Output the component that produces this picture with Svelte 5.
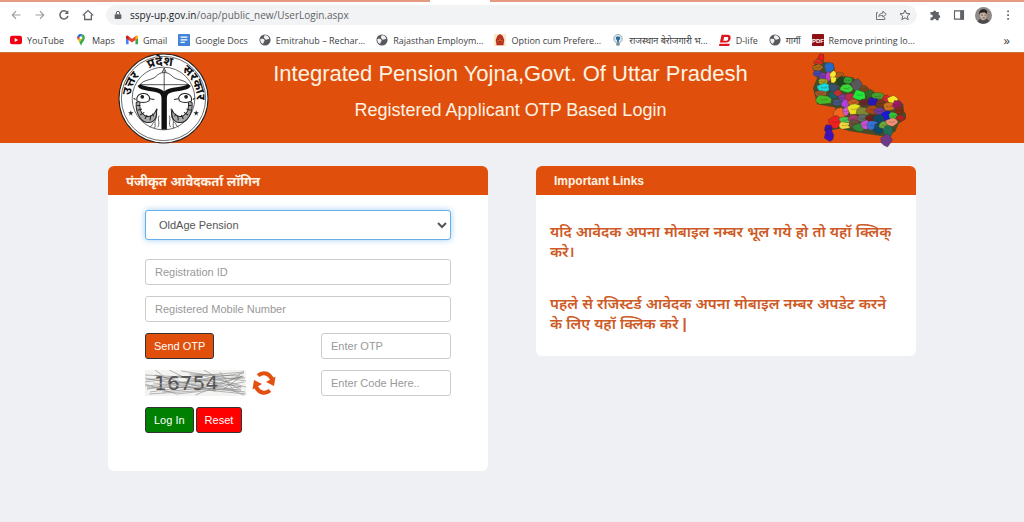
<script>
    let pension = 'OldAge Pension'
    let registration = ''
    let mobile = ''
    let otp = ''
    let code = ''

    const bookmarks = [
        { icon: 'youtube', label: 'YouTube' },
        { icon: 'maps', label: 'Maps' },
        { icon: 'gmail', label: 'Gmail' },
        { icon: 'docs', label: 'Google Docs' },
        { icon: 'globe', label: 'Emitrahub – Rechar...' },
        { icon: 'globe', label: 'Rajasthan Employm...' },
        { icon: 'option', label: 'Option cum Prefere...' },
        { icon: 'bulb', label: 'राजस्थान बेरोजगारी भ...' },
        { icon: 'dlife', label: 'D-life' },
        { icon: 'globe', label: 'गार्गी' },
        { icon: 'pdf', label: 'Remove printing lo...' }
    ]

    // districts: centre x, centre y, half width, half height, colour
    const districts = [
        [62, 24, 9, 10, '#f01818'], [54, 38, 14, 8, '#e03020'], [52, 54, 15, 10, '#b06818'],
        [86, 54, 14, 15, '#2468c8'], [52, 72, 14, 9, '#4048b0'], [68, 80, 12, 10, '#7838b8'],
        [84, 80, 9, 14, '#c838c8'], [98, 82, 10, 18, '#f8e830'], [68, 96, 14, 9, '#a8a020'],
        [118, 78, 14, 10, '#b05818'], [122, 96, 14, 15, '#204820'], [70, 114, 20, 13, '#18d8d8'],
        [98, 114, 14, 12, '#385070'], [142, 92, 14, 10, '#30a838'], [138, 116, 20, 12, '#38d838'],
        [168, 106, 16, 18, '#58585c'], [60, 132, 18, 9, '#a05828'], [70, 150, 24, 14, '#48b828'],
        [98, 136, 14, 11, '#186068'], [112, 130, 12, 9, '#d03030'], [126, 144, 13, 10, '#8038a8'],
        [148, 142, 15, 12, '#c02848'], [176, 136, 20, 15, '#20e838'], [190, 118, 14, 10, '#784820'],
        [206, 132, 14, 12, '#306828'], [230, 140, 18, 12, '#48a030'], [110, 158, 14, 10, '#405888'],
        [134, 162, 12, 13, '#b040d8'], [158, 158, 16, 10, '#c86020'], [190, 158, 14, 10, '#682828'],
        [216, 156, 16, 13, '#2818b0'], [240, 160, 15, 12, '#783818'], [256, 146, 12, 10, '#e02030'],
        [274, 150, 15, 12, '#f8e828'], [264, 170, 17, 13, '#d07020'], [288, 164, 14, 12, '#a01868'],
        [118, 190, 19, 16, '#f06820'], [136, 184, 10, 13, '#d858d0'], [160, 178, 20, 16, '#e8e020'],
        [186, 184, 20, 13, '#808838'], [214, 180, 20, 13, '#a84818'], [236, 184, 16, 11, '#7038a0'],
        [256, 198, 16, 15, '#1818d8'], [276, 198, 13, 12, '#30c838'], [294, 182, 13, 11, '#882818'],
        [298, 204, 14, 9, '#a82020'], [104, 216, 20, 18, '#f02020'], [134, 210, 19, 10, '#48c850'],
        [160, 206, 18, 12, '#a83868'], [186, 206, 17, 13, '#606868'], [212, 206, 18, 12, '#702018'],
        [232, 208, 16, 14, '#104868'], [132, 226, 17, 11, '#f0d840'], [160, 222, 16, 13, '#68503c'],
        [176, 232, 20, 12, '#308838'], [194, 224, 14, 13, '#c850d8'], [214, 226, 16, 14, '#3870d8'],
        [232, 236, 15, 15, '#104868'], [250, 226, 16, 12, '#70a838'], [272, 216, 17, 12, '#f09078'],
        [260, 244, 14, 18, '#207058'], [84, 236, 12, 12, '#4010b0'], [86, 256, 14, 17, '#4010c0'],
        [256, 270, 16, 18, '#703888']
    ]

    function outline(cx, cy, rx, ry, seed) {
        let points = []
        for (let i = 0; i < 9; i++) {
            let angle = (i / 9) * Math.PI * 2
            let wobble = 0.84 + 0.3 * Math.abs(Math.sin(seed * 7 + i * 5))
            points.push(Math.round(cx + Math.cos(angle) * rx * wobble) + ',' + Math.round(cy + Math.sin(angle) * ry * wobble))
        }
        return points.join(' ')
    }
</script>

<div class="browser">
    <div class="tabs"><span></span></div>
    <div class="toolbar">
        <button aria-label="Back" class="faded"><svg viewBox="0 0 16 16"><path d="M14 8H3M8 3L3 8l5 5" /></svg></button>
        <button aria-label="Forward" class="faded"><svg viewBox="0 0 16 16"><path d="M2 8h11M8 3l5 5-5 5" /></svg></button>
        <button aria-label="Reload"><svg viewBox="0 0 16 16"><path d="M13.2 9.2A5.4 5.4 0 1 1 12 4.3" stroke-width="2" /><path d="M13.8 1.5v5H8.8z" fill="#5f6368" stroke="none" /></svg></button>
        <button aria-label="Home"><svg viewBox="0 0 16 16"><path d="M1 8.500L8 2l7 6.500M3.500 7.500V14h9V7.500" stroke-width="1.700" /></svg></button>
        <div class="address">
            <svg class="lock" viewBox="0 0 12 14"><path d="M2 6h8a1 1 0 0 1 1 1v5a1 1 0 0 1-1 1H2a1 1 0 0 1-1-1V7a1 1 0 0 1 1-1z" fill="#5f6368" stroke="none" /><path d="M3.500 6V4a2.500 2.500 0 0 1 5 0v2" stroke-width="1.500" /></svg>
            <span class="url"><b>sspy-up.gov.in</b>/oap/public_new/UserLogin.aspx</span>
            <button aria-label="Share"><svg viewBox="0 0 16 16"><path d="M4 5H2v9h11v-3M5 10c.5-3 2.500-4.500 5.500-4.500V3L15 7l-4.500 4V8.500C8 8.500 6.500 9 5 10z" stroke-width="1.200" /></svg></button>
            <button aria-label="Bookmark this page"><svg viewBox="0 0 16 16"><path d="M8 1.500l1.900 4.400 4.800.4-3.600 3.200 1.100 4.700L8 11.700l-4.200 2.500 1.100-4.700-3.600-3.200 4.800-.4z" stroke-width="1.300" /></svg></button>
        </div>
        <button aria-label="Extensions"><svg viewBox="0 0 16 16"><path d="M2 4h3.500a2 2 0 1 1 4 0H13v4a2 2 0 1 1 0 4v3H9.500a2 2 0 1 0-4 0H2v-4a2 2 0 1 0 0-3.500z" fill="#5f6368" stroke="none" /></svg></button>
        <button aria-label="Side panel"><svg viewBox="0 0 16 16"><path d="M2 2.500h12v11H2z" /><path d="M9.500 2h5v12h-5z" fill="#5f6368" stroke="none" /></svg></button>
        <button aria-label="Profile" class="profile">
            <svg viewBox="0 0 18 18">
                <circle cx="9" cy="9" r="9" fill="#8f8986" stroke="none" />
                <path d="M3 16c1-4 4-4 5-4s6 0 7 3a9 9 0 0 1-12 1z" fill="#4d4a4d" stroke="none" />
                <path d="M5.500 6h6.500v4c0 3-2 4-3.500 4s-3-2-3-4z" fill="#c9b3a5" stroke="none" />
                <path d="M4.500 8c-1-6 6-7 8.500-3.500l-.5 3-2.500-2-4 .5z" fill="#252224" stroke="none" />
                <path d="M6.500 8.500h2M10 8.500h1.500M8 11.500h2.500" stroke="#4b302b" stroke-width=".8" />
            </svg>
        </button>
        <button aria-label="Menu"><svg viewBox="0 0 16 16"><path d="M7 2h2.200v2.200H7zM7 7h2.200v2.200H7zM7 12h2.200v2.200H7z" fill="#5f6368" stroke="none" /></svg></button>
    </div>
    <nav class="bookmarks">
        {#each bookmarks as item}
            <a href="#top">
                <svg viewBox="0 0 14 14">
                    {#if item.icon === 'youtube'}
                        <rect y="2" width="14" height="10" rx="2.500" fill="#f00012" /><path d="M5.500 4.700v4.600L9.500 7z" fill="#fff" />
                    {:else if item.icon === 'maps'}
                        <path d="M3 4.500L7 0a4 4 0 0 0-4 5z" fill="#4285f4" /><path d="M3 2.500A4.500 4.500 0 0 1 8.500.3L4 6z" fill="#1a73e8" />
                        <path d="M8.500.3c2 .5 3 2.300 3 4.200L6 9.500 4 7z" fill="#34a853" /><path d="M2.700 5.500C2.400 4 2.500 3 3.200 2.200L6 4.500 3.500 7z" fill="#ea4335" />
                        <path d="M3.500 7L9 2.500l-3 8z" fill="#fbbc04" /><path d="M11.500 4.500c0 3.500-3.500 5-4.300 9.500C6.500 12 6 11 5 9.500z" fill="#34a853" /><circle cx="7" cy="4.500" r="1.700" fill="#fff" />
                    {:else if item.icon === 'gmail'}
                        <path d="M0 3v9h3V5z" fill="#4285f4" /><path d="M14 3v9h-3V5z" fill="#34a853" /><path d="M0 3.500C0 2 1.500 1.500 3 2.500l4 3 4-3c1.500-1 3-.5 3 1V5L7 10 0 5z" fill="#ea4335" /><path d="M11 2.500c1.500-1 3-.5 3 1V5l-3 2z" fill="#fbbc04" /><path d="M0 3.500C0 2 1.500 1.500 3 2.500V7L0 5z" fill="#c5221f" />
                    {:else if item.icon === 'docs'}
                        <rect width="14" height="14" rx="1" fill="#4285d8" /><path d="M3 3h8v1.500H3zM3 6h8v1.500H3zM3 9h5v1.500H3z" fill="#fff" />
                    {:else if item.icon === 'globe'}
                        <circle cx="7" cy="7" r="6.500" fill="#55585c" /><path d="M1.500 6c2-1 5-.5 5 1.500 0 1.500-1.500 1.500-1.500 4C3 11 1.200 9 1.500 6zM6.500 1.500c3-.5 5 1.500 5.500 4-2 0-2 1.500-4 1S7 4.500 5.500 4z" fill="#f1f1f1" />
                    {:else if item.icon === 'option'}
                        <rect width="14" height="14" fill="#f8e8c6" /><path d="M4 2l3-2 3 2 2 5-1 6H3L2 7z" fill="#b82f23" /><path d="M4 7l3-2 3 2v3H4z" fill="#da5c2b" /><path d="M5 6.500h1M8 6.500h1M5 9h4" stroke="#572018" />
                    {:else if item.icon === 'bulb'}
                        <circle cx="7" cy="5.500" r="5" fill="#dbe8ef" stroke="#8fa5af" /><path d="M7 3a2 2 0 0 1 1 4v3H6V7a2 2 0 0 1 1-4z" fill="#296894" /><path d="M5 10.500h4v3H5z" fill="#7c8c8d" />
                    {:else if item.icon === 'dlife'}
                        <path d="M3 1h7c3 0 4 2 3.500 4.500S11 10 8 10H1zm3 2.500L5 8h3c2 0 2.500-1 2.700-2.500S10.500 3.500 9 3.500z" fill="#dc1720" fill-rule="evenodd" /><path d="M.5 11.500h12L12 14H0z" fill="#dc1720" />
                    {:else}
                        <rect width="14" height="14" rx="1" fill="#8f1015" /><text x="7" y="10" text-anchor="middle" class="pdf">PDF</text>
                    {/if}
                </svg>
                <span>{item.label}</span>
            </a>
        {/each}
        <button aria-label="More bookmarks">»</button>
    </nav>
</div>

<header id="top">
    <svg class="emblem" viewBox="0 0 270 270" role="img" aria-label="उत्तर प्रदेश सरकार">
        <defs><path id="ring" d="M62 200A98 98 0 1 1 208 200" /></defs>
        <circle cx="135" cy="135" r="132" fill="#fff" stroke="#222" stroke-width="3" />
        <circle cx="135" cy="135" r="125" fill="none" stroke="#222" stroke-width="2" />
        <circle cx="135" cy="135" r="93" fill="#fff" stroke="#222" stroke-width="2" />
        <g class="motto">
            <text><textPath href="#ring" startOffset="25%" text-anchor="middle">उत्तर</textPath></text>
            <text><textPath href="#ring" startOffset="48%" text-anchor="middle">प्रदेश</textPath></text>
            <text><textPath href="#ring" startOffset="74%" text-anchor="middle">सरकार</textPath></text>
        </g>
        <path d="M66 94c10-16 32-12 46-24 8-8 14-12 25-12s17 4 25 12c14 12 36 8 46 24M66 94h142M137 50v66M131 58l6-14 6 14" fill="none" stroke="#333" stroke-width="2.500" />
        <path d="M66 92c14 12 54 6 71 22 17-16 57-10 71-22l8 6c-10 18-48 12-65 22-5 4-6 9-6 16v91h-16v-91c0-7-1-12-6-16-17-10-55-4-65-22z" fill="#111" />
        <g id="fish" fill="none" stroke="#222" stroke-width="3">
            <path d="M66 140c-4 20 0 38 14 46 14 7 28-2 34-18 4 20-4 36-20 38-24 4-42-26-40-58z" fill="#aaa" />
            <path d="M56 134c4-16 30-20 38-2l-2 10c-10 6-24 6-36 0z" fill="#fff" />
            <circle cx="72" cy="130" r="4" fill="#222" />
            <path d="M52 138l-6-4M94 136l14 2M56 156h10M58 170l13-4M66 184l12-8M80 196l6-12M95 200l2-14M106 188l-4-8" />
            <path d="M118 166c-8 10 0 20-6 30s2 18-4 28M108 204c-8 6-6 14-14 16M122 186c-6 12 4 22-4 34" stroke-width="2" />
        </g>
        <use href="#fish" transform="matrix(-1 0 0 1 274 0)" />
        <path d="M38 170l2 6h6l-5 4 2 6-5-4-5 4 2-6-5-4h6zM232 170l2 6h6l-5 4 2 6-5-4-5 4 2-6-5-4h6z" fill="#222" />
    </svg>
    <div class="titles">
        <h1>Integrated Pension Yojna,Govt. Of Uttar Pradesh</h1>
        <h2>Registered Applicant OTP Based Login</h2>
    </div>
    <svg class="map" viewBox="35 11 279 285" role="img" aria-label="Uttar Pradesh districts">
        <path d="M56 18l14-4-1 24 30 4 5 28 28 10 24 3 30 28 35 18 30 8 35 8 20 18 2 20 12 18-28 20-10 24-34 14-62-10-38-6-28-8-32 6 12-38 4-30-54-10-12-48 12-30-13-28z" fill="#484b28" />
        {#each districts as [x, y, rx, ry, color], i}
            <polygon points={outline(x, y, rx, ry, i)} fill={color} stroke="#39351f" stroke-width="1" />
            {#if i % 3 !== 0}
                <path d="M{x - 8} {y}h5m2 1h4m1-2h5" stroke="#28251a" stroke-width="2" opacity=".5" />
            {/if}
        {/each}
    </svg>
</header>

<main>
    <section>
        <h3 class="hindi">पंजीकृत आवेदकर्ता लॉगिन</h3>
        <form on:submit|preventDefault>
            <select aria-label="Pension scheme" bind:value={pension}>
                <option>OldAge Pension</option>
            </select>
            <input type="text" aria-label="Registration ID" placeholder="Registration ID" bind:value={registration}>
            <input type="text" aria-label="Registered Mobile Number" placeholder="Registered Mobile Number" bind:value={mobile}>
            <div class="row">
                <button type="button" class="send">Send OTP</button>
                <input type="text" aria-label="Enter OTP" placeholder="Enter OTP" bind:value={otp}>
            </div>
            <div class="row">
                <div class="captcha">
                    <svg class="code" viewBox="0 0 100 26" preserveAspectRatio="none">
                        <rect width="100" height="26" fill="#f3f3f2" />
                        <path d="M0 5l38 2 60-5M0 12l55-7 45 12M2 19l42-8 54-8M4 24l45-3 49-9M0 8l60 12 40 4M10 0l22 17 63 3M24 0l20 10 55-2M0 16l98-9M36 1l64 10M5 22l63-9 30 12M50 25l38-16 10-8M74 2l15 20M0 14l31 10 64-7M58 0l37 20M12 10l80 10" fill="none" stroke="#999" stroke-width=".7" />
                        <path d="M1 10l33-4 62 11M17 22l40-4 42 4M2 17l55 1 40-12M44 4l50 2M10 5l60 16M78 19l18-13" fill="none" stroke="#777" stroke-width=".6" />
                        <text x="9" y="20">16754</text>
                        <path d="M2 19l75-9M8 13l65 7" stroke="#aaa" stroke-width=".7" />
                    </svg>
                    <button type="button" class="refresh" aria-label="Refresh code">
                        <svg viewBox="0 0 24 24">
                            <path d="M6 4.500C11 .5 17 2 20 8M18 19.500c-5 4-11 2.500-14-3.500" fill="none" stroke="#e2500f" stroke-width="4" />
                            <path d="M23.500 5.500L22 15l-8-4zM.5 18.500L2 9l8 4z" fill="#e2500f" />
                        </svg>
                    </button>
                </div>
                <input type="text" aria-label="Enter Code Here" placeholder="Enter Code Here.." bind:value={code}>
            </div>
            <div class="actions">
                <button class="login">Log In</button>
                <button type="reset" class="reset">Reset</button>
            </div>
        </form>
    </section>

    <section>
        <h3>Important Links</h3>
        <div class="links">
            <a href="#top">यदि आवेदक अपना मोबाइल नम्बर भूल गये हो तो यहॉ क्लिक् करे।</a>
            <a href="#top">पहले से रजिस्टर्ड आवेदक अपना मोबाइल नम्बर अपडेट करने के लिए यहॉ क्लिक करे |</a>
        </div>
    </section>
</main>

<style>
    :global(body) {
        margin: 0;
        background: #eef0f4;
        font-family: "Liberation Sans", "Noto Sans", sans-serif;
    }
    * {
        box-sizing: border-box;
    }
    button {
        font-family: inherit;
        cursor: pointer;
    }
    .browser {
        background: #fff;
        border-bottom: 1px solid #c9703f;
        font-family: "Open Sans", "Noto Sans", sans-serif;
        color: #5f6368;
    }
    .tabs {
        height: 2px;
        background: #e79a82;
    }
    .tabs span {
        display: block;
        width: 60px;
        height: 2px;
        margin-left: 42%;
        background: #fff;
    }
    .toolbar {
        display: flex;
        align-items: center;
        gap: 12px;
        height: 26px;
        padding: 0 10px;
    }
    .toolbar button {
        flex: none;
        width: 12px;
        height: 12px;
        padding: 0;
        border: 0;
        background: none;
    }
    .toolbar svg {
        display: block;
        width: 100%;
        height: 100%;
        fill: none;
        stroke: #5f6368;
        stroke-width: 1.5;
    }
    .toolbar .faded {
        opacity: .6;
    }
    .toolbar .profile {
        width: 17px;
        height: 17px;
        margin: 0 -2px;
    }
    .address {
        flex: 1;
        display: flex;
        align-items: center;
        gap: 12px;
        height: 20px;
        padding: 0 6px 0 8px;
        border-radius: 10px;
        background: #f1f3f4;
    }
    .address .lock {
        flex: none;
        width: 8px;
        height: 10px;
    }
    .url {
        flex: 1;
        margin-left: -4px;
        font-size: 10px;
        white-space: nowrap;
    }
    .url b {
        font-weight: 400;
        color: #202124;
    }
    .bookmarks {
        display: flex;
        align-items: center;
        gap: 11px;
        height: 24px;
        padding: 0 14px 0 10px;
    }
    .bookmarks a {
        display: flex;
        align-items: center;
        gap: 5px;
        font-size: 9px;
        white-space: nowrap;
        color: #3c4043;
        text-decoration: none;
    }
    .bookmarks svg {
        width: 12px;
        height: 12px;
    }
    .bookmarks button {
        margin-left: auto;
        padding: 0;
        border: 0;
        background: none;
        font-size: 13px;
        color: #3c4043;
    }
    .pdf {
        font: bold 7px "Liberation Sans", sans-serif;
        fill: #fff;
    }

    header {
        display: flex;
        justify-content: space-between;
        height: 90px;
        padding: 0 118px;
        background: #e0500c;
        color: #fff3e4;
    }
    .emblem {
        flex: none;
        width: 91px;
        height: 91px;
    }
    .motto {
        font: bold 37px "Noto Sans", sans-serif;
        fill: #111;
    }
    .map {
        flex: none;
        width: 94px;
        height: 96px;
    }
    .titles {
        text-align: center;
    }
    h1, h2 {
        margin: 0;
        font-weight: 400;
    }
    h1 {
        margin-top: 8px;
        font-size: 22px;
        line-height: 26px;
    }
    h2 {
        margin-top: 11px;
        font-size: 18px;
        line-height: 24px;
    }

    main {
        display: grid;
        grid-template-columns: 1fr 1fr;
        align-items: start;
        gap: 48px;
        padding: 23px 108px;
    }
    section {
        overflow: hidden;
        border-radius: 6px;
        background: #fff;
    }
    h3 {
        margin: 0;
        padding: 2px 18px 0;
        border-radius: 3px 3px 0 0;
        background: #e0500c;
        color: #fff3e4;
        font-size: 12px;
        line-height: 27px;
    }
    .hindi {
        font-size: 13px;
    }
    form {
        display: flex;
        flex-direction: column;
        gap: 11px;
        padding: 15px 37px 38px;
    }
    input, select {
        width: 100%;
        height: 26px;
        padding: 0 9px;
        border: 1px solid #ccc;
        border-radius: 3px;
        background: #fff;
        color: #555;
        font-family: inherit;
        font-size: 11px;
    }
    input::placeholder {
        color: #999;
    }
    select {
        height: 30px;
        margin-bottom: 8px;
        border-color: #66afe9;
        box-shadow: 0 0 6px rgba(102, 175, 233, .6);
    }
    .row {
        display: flex;
        align-items: center;
        justify-content: space-between;
    }
    .row input {
        width: 130px;
    }
    .send, .login, .reset {
        height: 26px;
        padding: 0 8px;
        border: 1px solid #333;
        border-radius: 3px;
        color: #fff;
        font-size: 11px;
    }
    .send {
        background: #e0500c;
    }
    .login {
        background: #008000;
    }
    .reset {
        background: #f00;
    }
    .actions {
        display: flex;
        gap: 2px;
    }
    .captcha {
        display: flex;
        align-items: center;
        gap: 6px;
    }
    .code {
        width: 101px;
        height: 26px;
    }
    .code text {
        font: 20px "DejaVu Sans", sans-serif;
        fill: #555;
    }
    .refresh {
        width: 24px;
        height: 24px;
        padding: 0;
        border: 0;
        background: none;
    }
    .links {
        display: flex;
        flex-direction: column;
        gap: 32px;
        padding: 27px 14px 22px;
    }
    .links a {
        color: #ce5a26;
        font-size: 15px;
        font-weight: 600;
        line-height: 20px;
        text-decoration: none;
    }
</style>
